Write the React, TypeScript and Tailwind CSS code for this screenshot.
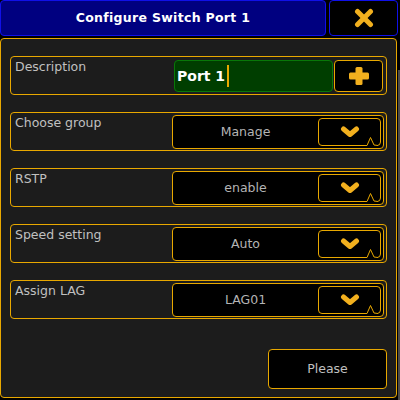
import React from "react";

const ORANGE = "#e8a800";

function Chevron() {
  return (
    <svg width="20" height="12" viewBox="0 0 20 12">
      <polyline points="3.5,3 10,8.5 16.5,3" fill="none" stroke="#f2b01e" strokeWidth="5" strokeLinecap="round" strokeLinejoin="round" />
    </svg>
  );
}

function SelectRow({ label, value }: { label: string; value: string }) {
  return (
    <div className="h-[39px] border border-[#e8a800] rounded-[4px] flex items-start justify-between pl-[4px] pr-[2px]">
      <div className="pt-[2px] text-[12.5px] leading-[16px] text-[#c0c0c0]">{label}</div>
      <div className="mt-[2px] w-[212px] h-[34px] bg-black border border-[#e8a800] rounded-[4px] flex items-center pr-[2px]">
        <div className="flex-1 text-center text-[12.5px] text-[#b4b4b4]">{value}</div>
        <div className="relative w-[63px] h-[28px] border border-[#e8a800] rounded-[4px] bg-black flex items-center justify-center">
          <Chevron />
          <svg className="absolute right-[2px] bottom-[-1px]" width="11" height="10" viewBox="0 0 11 10">
            <rect x="0" y="8" width="11" height="2" fill="#000" />
            <polyline points="0,9.5 3.5,1.5 7,9 11,9.5" fill="none" stroke={ORANGE} strokeWidth="1" />
          </svg>
        </div>
      </div>
    </div>
  );
}

export default function App() {
  return (
    <div className="relative w-[400px] h-[400px] bg-black overflow-hidden font-['DejaVu_Sans',sans-serif]">
      <div className="flex h-[36px] gap-[3px]">
        <div className="w-[326px] h-full bg-[#000080] border border-[#1010e8] rounded-[4px] flex items-center justify-center text-white font-bold text-[12.5px] tracking-[0.3px]">
          Configure Switch Port 1
        </div>
        <div className="w-[69px] h-full bg-black border border-[#1010e8] rounded-[4px] flex items-center justify-center">
          <svg width="20" height="20" viewBox="0 0 20 20">
            <line x1="3.5" y1="3.5" x2="16.5" y2="16.5" stroke="#f2b01e" strokeWidth="5" strokeLinecap="round" />
            <line x1="16.5" y1="3.5" x2="3.5" y2="16.5" stroke="#f2b01e" strokeWidth="5" strokeLinecap="round" />
          </svg>
        </div>
      </div>
      <div className="mt-[2px] w-[397px] h-[360px] bg-[#1c1c1c] border border-[#e8a800] rounded-[4px] px-[9px] pt-[17px] pb-[8px] flex flex-col gap-[17px]">
        <div className="h-[39px] border border-[#e8a800] rounded-[4px] flex items-start justify-between pl-[4px] pr-[3px]">
          <div className="pt-[2px] text-[12.5px] leading-[16px] text-[#c0c0c0]">Description</div>
          <div className="mt-[3px] flex gap-[1px]">
            <div className="w-[159px] h-[32px] bg-[#003e00] border border-[#087808] rounded-[4px] flex items-center pl-[2px]">
              <span className="text-white font-bold text-[14px]">Port 1</span>
              <span className="ml-[2px] w-[2px] h-[22px] bg-[#e8a800]" />
            </div>
            <div className="w-[49px] h-[32px] bg-black border border-[#e8a800] rounded-[4px] flex items-center justify-center">
              <svg width="20" height="18" viewBox="0 0 20 18">
                <rect x="0" y="5.5" width="20" height="7" rx="1.5" fill="#f2b01e" />
                <rect x="6.5" y="0" width="7" height="18" rx="1.5" fill="#f2b01e" />
              </svg>
            </div>
          </div>
        </div>
        <SelectRow label="Choose group" value="Manage" />
        <SelectRow label="RSTP" value="enable" />
        <SelectRow label="Speed setting" value="Auto" />
        <SelectRow label="Assign LAG" value="LAG01" />
        <div className="mt-auto self-end w-[119px] h-[40px] bg-black border border-[#e8a800] rounded-[4px] flex items-center justify-center text-[12.5px] text-[#c0c0c0]">
          Please
        </div>
      </div>
      <div className="absolute right-0 top-[70px] bottom-0 w-[2px] bg-[#4a4a4a]" />
    </div>
  );
}
